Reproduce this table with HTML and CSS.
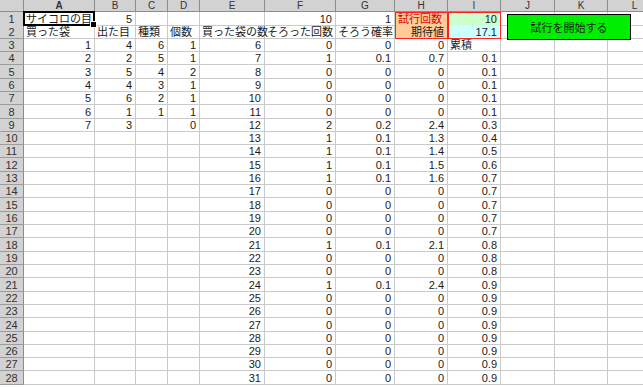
FILE: index.html
```html
<!DOCTYPE html>
<html lang="ja">
<head>
<meta charset="utf-8">
<title>サイコロの目</title>
<link rel="stylesheet" href="styles.css">
</head>
<body>
<div class="sheet">
  <div class="row head"><div></div><div class="hsel">A</div><div>B</div><div>C</div><div>D</div><div>E</div><div>F</div><div>G</div><div>H</div><div>I</div><div>J</div><div>K</div><div>L</div></div>
  <div class="row"><div class="rh">1</div><div class="sel">サイコロの目</div><div class="n">5</div><div></div><div></div><div></div><div class="n">10</div><div class="n">1</div><div class="t1">試行回数</div><div class="t2 n">10</div><div></div><div></div><div></div></div>
  <div class="row"><div class="rh">2</div><div>買った袋</div><div>出た目</div><div>種類</div><div>個数</div><div>買った袋の数</div><div>そろった回数</div><div>そろう確率</div><div class="t3 n">期待値</div><div class="t4 n">17.1</div><div></div><div></div><div></div></div>
  <div class="row"><div class="rh">3</div><div class="n">1</div><div class="n">4</div><div class="n">6</div><div class="n">1</div><div class="n">6</div><div class="n">0</div><div class="n">0</div><div class="n">0</div><div>累積</div><div></div><div></div><div></div></div>
  <div class="row"><div class="rh">4</div><div class="n">2</div><div class="n">2</div><div class="n">5</div><div class="n">1</div><div class="n">7</div><div class="n">1</div><div class="n">0.1</div><div class="n">0.7</div><div class="n">0.1</div><div></div><div></div><div></div></div>
  <div class="row"><div class="rh">5</div><div class="n">3</div><div class="n">5</div><div class="n">4</div><div class="n">2</div><div class="n">8</div><div class="n">0</div><div class="n">0</div><div class="n">0</div><div class="n">0.1</div><div></div><div></div><div></div></div>
  <div class="row"><div class="rh">6</div><div class="n">4</div><div class="n">4</div><div class="n">3</div><div class="n">1</div><div class="n">9</div><div class="n">0</div><div class="n">0</div><div class="n">0</div><div class="n">0.1</div><div></div><div></div><div></div></div>
  <div class="row"><div class="rh">7</div><div class="n">5</div><div class="n">6</div><div class="n">2</div><div class="n">1</div><div class="n">10</div><div class="n">0</div><div class="n">0</div><div class="n">0</div><div class="n">0.1</div><div></div><div></div><div></div></div>
  <div class="row"><div class="rh">8</div><div class="n">6</div><div class="n">1</div><div class="n">1</div><div class="n">1</div><div class="n">11</div><div class="n">0</div><div class="n">0</div><div class="n">0</div><div class="n">0.1</div><div></div><div></div><div></div></div>
  <div class="row"><div class="rh">9</div><div class="n">7</div><div class="n">3</div><div></div><div class="n">0</div><div class="n">12</div><div class="n">2</div><div class="n">0.2</div><div class="n">2.4</div><div class="n">0.3</div><div></div><div></div><div></div></div>
  <div class="row"><div class="rh">10</div><div></div><div></div><div></div><div></div><div class="n">13</div><div class="n">1</div><div class="n">0.1</div><div class="n">1.3</div><div class="n">0.4</div><div></div><div></div><div></div></div>
  <div class="row"><div class="rh">11</div><div></div><div></div><div></div><div></div><div class="n">14</div><div class="n">1</div><div class="n">0.1</div><div class="n">1.4</div><div class="n">0.5</div><div></div><div></div><div></div></div>
  <div class="row"><div class="rh">12</div><div></div><div></div><div></div><div></div><div class="n">15</div><div class="n">1</div><div class="n">0.1</div><div class="n">1.5</div><div class="n">0.6</div><div></div><div></div><div></div></div>
  <div class="row"><div class="rh">13</div><div></div><div></div><div></div><div></div><div class="n">16</div><div class="n">1</div><div class="n">0.1</div><div class="n">1.6</div><div class="n">0.7</div><div></div><div></div><div></div></div>
  <div class="row"><div class="rh">14</div><div></div><div></div><div></div><div></div><div class="n">17</div><div class="n">0</div><div class="n">0</div><div class="n">0</div><div class="n">0.7</div><div></div><div></div><div></div></div>
  <div class="row"><div class="rh">15</div><div></div><div></div><div></div><div></div><div class="n">18</div><div class="n">0</div><div class="n">0</div><div class="n">0</div><div class="n">0.7</div><div></div><div></div><div></div></div>
  <div class="row"><div class="rh">16</div><div></div><div></div><div></div><div></div><div class="n">19</div><div class="n">0</div><div class="n">0</div><div class="n">0</div><div class="n">0.7</div><div></div><div></div><div></div></div>
  <div class="row"><div class="rh">17</div><div></div><div></div><div></div><div></div><div class="n">20</div><div class="n">0</div><div class="n">0</div><div class="n">0</div><div class="n">0.7</div><div></div><div></div><div></div></div>
  <div class="row"><div class="rh">18</div><div></div><div></div><div></div><div></div><div class="n">21</div><div class="n">1</div><div class="n">0.1</div><div class="n">2.1</div><div class="n">0.8</div><div></div><div></div><div></div></div>
  <div class="row"><div class="rh">19</div><div></div><div></div><div></div><div></div><div class="n">22</div><div class="n">0</div><div class="n">0</div><div class="n">0</div><div class="n">0.8</div><div></div><div></div><div></div></div>
  <div class="row"><div class="rh">20</div><div></div><div></div><div></div><div></div><div class="n">23</div><div class="n">0</div><div class="n">0</div><div class="n">0</div><div class="n">0.8</div><div></div><div></div><div></div></div>
  <div class="row"><div class="rh">21</div><div></div><div></div><div></div><div></div><div class="n">24</div><div class="n">1</div><div class="n">0.1</div><div class="n">2.4</div><div class="n">0.9</div><div></div><div></div><div></div></div>
  <div class="row"><div class="rh">22</div><div></div><div></div><div></div><div></div><div class="n">25</div><div class="n">0</div><div class="n">0</div><div class="n">0</div><div class="n">0.9</div><div></div><div></div><div></div></div>
  <div class="row"><div class="rh">23</div><div></div><div></div><div></div><div></div><div class="n">26</div><div class="n">0</div><div class="n">0</div><div class="n">0</div><div class="n">0.9</div><div></div><div></div><div></div></div>
  <div class="row"><div class="rh">24</div><div></div><div></div><div></div><div></div><div class="n">27</div><div class="n">0</div><div class="n">0</div><div class="n">0</div><div class="n">0.9</div><div></div><div></div><div></div></div>
  <div class="row"><div class="rh">25</div><div></div><div></div><div></div><div></div><div class="n">28</div><div class="n">0</div><div class="n">0</div><div class="n">0</div><div class="n">0.9</div><div></div><div></div><div></div></div>
  <div class="row"><div class="rh">26</div><div></div><div></div><div></div><div></div><div class="n">29</div><div class="n">0</div><div class="n">0</div><div class="n">0</div><div class="n">0.9</div><div></div><div></div><div></div></div>
  <div class="row"><div class="rh">27</div><div></div><div></div><div></div><div></div><div class="n">30</div><div class="n">0</div><div class="n">0</div><div class="n">0</div><div class="n">0.9</div><div></div><div></div><div></div></div>
  <div class="row"><div class="rh">28</div><div></div><div></div><div></div><div></div><div class="n">31</div><div class="n">0</div><div class="n">0</div><div class="n">0</div><div class="n">0.9</div><div></div><div></div><div></div></div>
  <div class="btn">試行を開始する</div>
</div>
</body>
</html>
```
FILE: styles.css
```css
html, body {
  margin: 0;
  padding: 0;
  background: #fff;
  overflow: hidden;
}
body {
  font-family: "Liberation Sans", "Noto Sans CJK JP", sans-serif;
  font-size: 11px;
  color: #1a1a1a;
}
.sheet {
  position: relative;
  width: 643px;
  height: 387px;
  overflow: hidden;
}
.row {
  display: grid;
  grid-template-columns: 24px 71px 41px 32px 32px 65px 71px 59px 53px 53px 54px 53px 54px;
  height: 13.32px;
}
.row > div {
  box-sizing: border-box;
  border-right: 1px solid #cacaca;
  border-bottom: 1px solid #cacaca;
  padding: 0 2px;
  line-height: 12px;
  white-space: nowrap;
  display: flex;
  align-items: flex-end;
  justify-content: flex-start;
}
.row > div.n {
  justify-content: flex-end;
  padding-right: 3px;
}
.row.head {
  height: 12px;
}
.row.head > div {
  background: #d2d2d2;
  border-right: 1px solid #8c8c8c;
  border-bottom: 1px solid #8c8c8c;
  justify-content: center;
  align-items: center;
  font-size: 10px;
  line-height: 11px;
  color: #333;
}
.row.head > div.hsel {
  font-weight: bold;
}
.row > div.rh {
  background: #d2d2d2;
  border-right: 1px solid #8c8c8c;
  border-bottom: 1px solid #9c9c9c;
  justify-content: center;
  color: #333;
}
.row > div.sel {
  position: relative;
}
.sel::after {
  content: "";
  position: absolute;
  left: -1px;
  top: -1px;
  right: -1px;
  bottom: -1px;
  border: 2px solid #000;
}
.sel::before {
  content: "";
  position: absolute;
  right: -3px;
  bottom: -3px;
  width: 5px;
  height: 5px;
  background: #000;
  border: 1px solid #fff;
  z-index: 2;
}
.row > div.t1,
.row > div.t2,
.row > div.t3,
.row > div.t4 {
  border: 1px solid #ff2020;
}
.row > div.t1 {
  background: #ffcc99;
  color: #e00000;
}
.row > div.t2 {
  background: #ccffcc;
}
.row > div.t3 {
  background: #ffcc99;
  border-top: 0;
}
.row > div.t4 {
  background: #ccffff;
  border-top: 0;
}
.btn {
  position: absolute;
  left: 507px;
  top: 14px;
  width: 124px;
  height: 26px;
  box-sizing: border-box;
  background: #00ee00;
  border: 1px solid #000;
  display: flex;
  align-items: center;
  justify-content: center;
  font-size: 11px;
  color: #1a1a1a;
}
```
